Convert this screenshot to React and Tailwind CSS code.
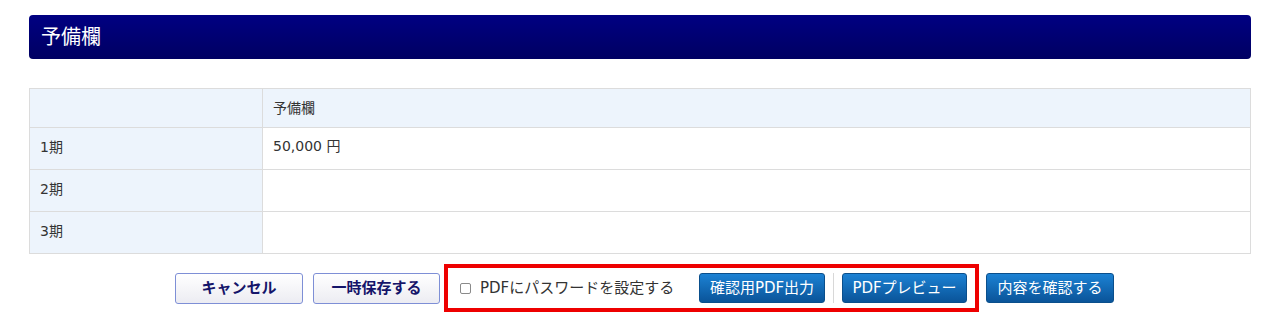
export default function App() {
  const font = { fontFamily: '"DejaVu Sans", "Noto Sans CJK JP", sans-serif' };
  const rows = [
    { label: "1期", value: "50,000 円" },
    { label: "2期", value: "" },
    { label: "3期", value: "" },
  ];
  return (
    <div className="w-[1280px] h-[323px] bg-white pt-[15px] px-[29px]" style={font}>
      <div className="h-[44px] rounded-[4px] bg-gradient-to-b from-[#000082] to-[#000062] flex items-center pl-[12px] text-white text-[20px] leading-none">
        予備欄
      </div>

      <table className="mt-[29px] w-full border-collapse text-[14px] text-[#333]">
        <tbody>
          <tr className="h-[39px] bg-[#edf4fc]">
            <td className="w-[233px] border border-[#dcdcdc]"></td>
            <td className="border border-[#dcdcdc] pl-[10px]">予備欄</td>
          </tr>
          {rows.map((r) => (
            <tr key={r.label} className="h-[42px]">
              <td className="bg-[#edf4fc] border border-[#dcdcdc] pl-[10px] align-middle pb-[2px]">{r.label}</td>
              <td className="bg-white border border-[#dcdcdc] pl-[10px] align-top pt-[8px]">{r.value}</td>
            </tr>
          ))}
        </tbody>
      </table>

      <div className="mt-[10px] flex justify-center items-center pl-[9px]">
        <button className="w-[128px] h-[31px] rounded-[3px] border border-[#7e8fd6] bg-gradient-to-b from-white to-[#ececf2] text-[#15156a] font-bold text-[15px] leading-none">
          キャンセル
        </button>
        <button className="ml-[10px] w-[127px] h-[31px] rounded-[3px] border border-[#7e8fd6] bg-gradient-to-b from-white to-[#ececf2] text-[#15156a] font-bold text-[15px] leading-none">
          一時保存する
        </button>
        <div className="ml-[4px] w-[535px] h-[48px] border-[4px] border-[#ee0000] flex items-center pl-[12px] pr-[8px]">
          <span className="w-[11px] h-[11px] border border-[#8a8a8a] rounded-[2px] bg-white"></span>
          <span className="ml-[9px] text-[15px] text-[#333] leading-none">PDFにパスワードを設定する</span>
          <button className="ml-auto w-[126px] h-[30px] rounded-[3px] border border-[#0a4f8c] bg-gradient-to-b from-[#1c82d4] to-[#0a5499] text-white text-[15px] leading-none">
            確認用PDF出力
          </button>
          <span className="mx-[8px] w-px h-[30px] bg-[#d8d8d8]"></span>
          <button className="w-[125px] h-[30px] rounded-[3px] border border-[#0a4f8c] bg-gradient-to-b from-[#1c82d4] to-[#0a5499] text-white text-[15px] leading-none">
            PDFプレビュー
          </button>
        </div>
        <button className="ml-[7px] w-[128px] h-[30px] rounded-[3px] border border-[#0a4f8c] bg-gradient-to-b from-[#1c82d4] to-[#0a5499] text-white text-[15px] leading-none">
          内容を確認する
        </button>
      </div>
    </div>
  );
}
